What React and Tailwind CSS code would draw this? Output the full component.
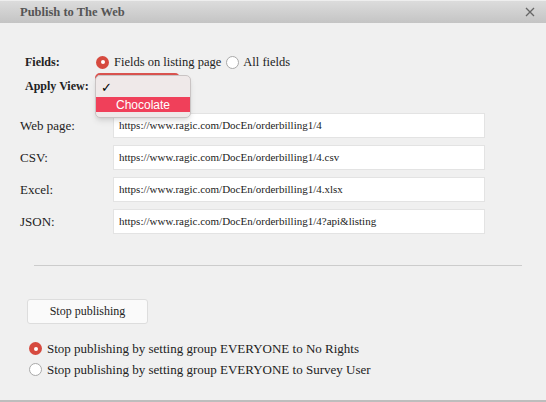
import React from 'react';

const serif = { fontFamily: '"Liberation Serif", "Times New Roman", serif' };

const links = [
  { label: 'Web page:', url: 'https://www.ragic.com/DocEn/orderbilling1/4' },
  { label: 'CSV:', url: 'https://www.ragic.com/DocEn/orderbilling1/4.csv' },
  { label: 'Excel:', url: 'https://www.ragic.com/DocEn/orderbilling1/4.xlsx' },
  { label: 'JSON:', url: 'https://www.ragic.com/DocEn/orderbilling1/4?api&listing' },
];

const Radio = ({ checked }) =>
  checked ? (
    <span className="flex h-[13px] w-[13px] shrink-0 items-center justify-center rounded-full bg-[#d64a3f]">
      <span className="h-[4px] w-[4px] rounded-full bg-white" />
    </span>
  ) : (
    <span className="block h-[13px] w-[13px] shrink-0 rounded-full border border-[#a9a9a9] bg-white" />
  );

export default function App() {
  return (
    <div className="flex h-[402px] w-[546px] flex-col overflow-hidden border-b-2 border-[#bdbdbd] bg-[#f0f0f0] text-[#222]" style={serif}>
      {/* title bar */}
      <div className="flex h-[23px] shrink-0 items-center justify-between border-t border-[#eeeeee] bg-gradient-to-b from-[#dcdcdc] to-[#c4c4c4] pl-5 pr-[11px]">
        <span className="text-[12.5px] font-bold text-[#555]">Publish to The Web</span>
        <svg width="10" height="10" viewBox="0 0 10 10" className="text-[#666]">
          <path d="M1 1 L9 9 M9 1 L1 9" stroke="currentColor" strokeWidth="1.3" />
        </svg>
      </div>

      <div className="flex flex-col px-5">
        {/* fields */}
        <div className="mt-[31px] flex h-[16px] items-center pl-[5px] text-[12.5px]">
          <span className="w-[71px] text-[12px] font-bold">Fields:</span>
          <Radio checked />
          <span className="ml-[5px]">Fields on listing page</span>
          <span className="ml-[5px]"><Radio /></span>
          <span className="ml-[4px]">All fields</span>
        </div>

        {/* apply view with open dropdown */}
        <div className="relative mt-[8px] flex h-[16px] items-center pl-[5px]">
          <span className="w-[70px] text-[12px] font-bold">Apply View:</span>
          <div className="-mt-[4px] h-[22px] w-[85px] shrink-0 rounded-[5px] border-2 border-[#d9534f] bg-[#f3e3e3]" />
          <div className="absolute left-[75px] top-[-3px] z-10 w-[96px] rounded-[5px] border border-[#c9c4c4] bg-[#efe9e9] pb-[5px] pt-[3px] shadow-md">
            <div className="flex h-[18px] items-center pl-[5px] text-[13px] text-black">✓</div>
            <div className="flex h-[15px] items-center bg-[#f0405a] pl-[20px] text-[12px] text-white" style={{ fontFamily: '"Liberation Sans", Arial, sans-serif' }}>
              Chocolate
            </div>
          </div>
        </div>

        {/* links */}
        <div className="mt-[19px] flex flex-col gap-[7px]">
          {links.map((l) => (
            <div key={l.url} className="flex items-center">
              <span className="w-[93px] text-[13px]">{l.label}</span>
              <div className="flex h-[25px] w-[372px] items-center border border-[#e3e3e3] bg-white px-[5px] text-[11px]">
                {l.url}
              </div>
            </div>
          ))}
        </div>

        <div className="ml-[14px] mr-[4px] mt-[31px] h-px bg-[#cccccc]" />

        <div className="mt-[32px] pl-[7px]">
          <button className="h-[25px] w-[121px] rounded-[3px] border border-[#dddddd] bg-[#fafafa] text-[12px]">
            Stop publishing
          </button>
        </div>

        <div className="mt-[15px] flex flex-col gap-px pl-[9px] text-[13px] leading-[20px]">
          <label className="flex items-center gap-[5px]">
            <Radio checked />
            <span>Stop publishing by setting group EVERYONE to No Rights</span>
          </label>
          <label className="flex items-center gap-[5px]">
            <Radio />
            <span>Stop publishing by setting group EVERYONE to Survey User</span>
          </label>
        </div>
      </div>
    </div>
  );
}
